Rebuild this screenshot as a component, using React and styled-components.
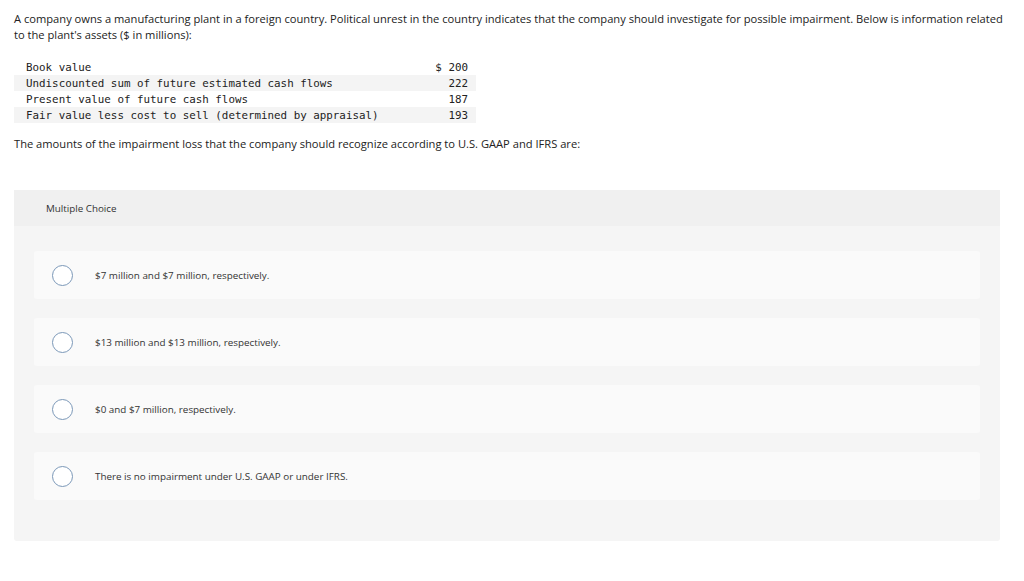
import React from 'react';
import styled, { createGlobalStyle } from 'styled-components';

const GlobalStyle = createGlobalStyle`
  body {
    margin: 0;
    background: #fff;
    font-family: "Open Sans", "Liberation Sans", Arial, sans-serif;
    color: #222;
  }
`;

const Page = styled.div`
  padding: 11px 14px 0 14px;
`;

const Prompt = styled.p`
  margin: 0;
  font-size: 11.15px;
  line-height: 16px;
  color: #222;
`;

const DataTable = styled.table`
  margin: 16px 0 13px;
  border-collapse: collapse;
  width: 462px;
  font-family: "DejaVu Sans Mono", "Liberation Mono", monospace;
  font-size: 10.85px;
  color: #222;
`;

const Row = styled.tr`
  background: ${p => (p.$striped ? '#f4f4f4' : 'transparent')};
`;

const Cell = styled.td`
  height: 16px;
  padding: 0 8px 0 12px;
  white-space: pre;
  text-align: ${p => (p.$num ? 'right' : 'left')};
`;

const Panel = styled.div`
  margin-top: 38px;
  width: 986px;
  background: #f5f5f5;
  border-radius: 0 0 3px 3px;
  padding-bottom: 41px;
`;

const PanelHead = styled.div`
  height: 36px;
  background: #f0f0f0;
  display: flex;
  align-items: center;
  padding-left: 32px;
  font-size: 9.8px;
  color: #333;
`;

const Options = styled.div`
  display: flex;
  flex-direction: column;
  gap: 19px;
  padding: 25px 20px 0;
`;

const Option = styled.label`
  height: 48px;
  background: #fafafa;
  border-radius: 3px;
  display: flex;
  align-items: center;
  padding-left: 18px;
  font-size: 9.85px;
  color: #333;
  cursor: pointer;
`;

const Radio = styled.span`
  width: 19px;
  height: 19px;
  border-radius: 50%;
  border: 1px solid #7b98b8;
  background: #fff;
  margin-right: 22px;
  flex-shrink: 0;
`;

const rows = [
  ['Book value', '$ 200'],
  ['Undiscounted sum of future estimated cash flows', '222'],
  ['Present value of future cash flows', '187'],
  ['Fair value less cost to sell (determined by appraisal)', '193'],
];

const choices = [
  '$7 million and $7 million, respectively.',
  '$13 million and $13 million, respectively.',
  '$0 and $7 million, respectively.',
  'There is no impairment under U.S. GAAP or under IFRS.',
];

export default function App() {
  return (
    <>
      <GlobalStyle />
      <Page>
        <Prompt>
          A company owns a manufacturing plant in a foreign country. Political unrest in the country indicates that the company should investigate for possible impairment. Below is information related to the plant's assets ($ in millions):
        </Prompt>
        <DataTable>
          <tbody>
            {rows.map(([label, value], i) => (
              <Row key={label} $striped={i % 2 === 1}>
                <Cell>{label}</Cell>
                <Cell $num>{value}</Cell>
              </Row>
            ))}
          </tbody>
        </DataTable>
        <Prompt>
          The amounts of the impairment loss that the company should recognize according to U.S. GAAP and IFRS are:
        </Prompt>
        <Panel>
          <PanelHead>Multiple Choice</PanelHead>
          <Options>
            {choices.map(c => (
              <Option key={c}>
                <Radio />
                {c}
              </Option>
            ))}
          </Options>
        </Panel>
      </Page>
    </>
  );
}
